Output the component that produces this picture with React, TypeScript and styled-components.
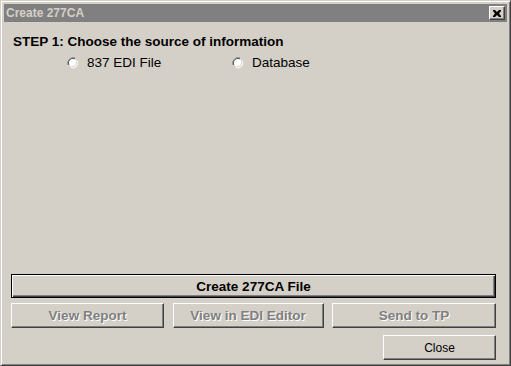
import React, { useState } from "react";
import styled, { createGlobalStyle, css } from "styled-components";

const GlobalStyle = createGlobalStyle`
  html, body {
    margin: 0;
    padding: 0;
    background: #d4d0c8;
  }
  * {
    box-sizing: border-box;
  }
`;

const raised = css`
  border: 1px solid;
  border-color: #ffffff #404040 #404040 #ffffff;
  box-shadow: inset -1px -1px #808080, inset 1px 1px #d4d0c8;
`;

const Window = styled.div`
  width: 511px;
  height: 366px;
  display: flex;
  flex-direction: column;
  padding: 2px;
  background: #d4d0c8;
  border: 1px solid;
  border-color: #d4d0c8 #404040 #404040 #d4d0c8;
  box-shadow: inset 1px 1px #ffffff, inset -1px -1px #808080;
  font-family: "Liberation Sans", Arial, sans-serif;
`;

const TitleBar = styled.div`
  height: 18px;
  margin: 1px;
  display: flex;
  align-items: center;
  justify-content: space-between;
  padding: 0 2px 0 2px;
  background: #808080;
  color: #d4d0c8;
  font-size: 12px;
  font-weight: bold;
`;

const CloseBox = styled.button`
  width: 16px;
  height: 14px;
  padding: 0;
  display: flex;
  align-items: center;
  justify-content: center;
  background: #d4d0c8;
  ${raised}
`;

const Body = styled.div`
  flex: 1;
  display: flex;
  flex-direction: column;
  padding: 11px 12px 3px 8px;
`;

const Heading = styled.div`
  font-size: 13.5px;
  font-weight: bold;
  line-height: 15px;
  padding-left: 2px;
  color: #000;
`;

const RadioRow = styled.div`
  display: flex;
  margin-top: 6px;
  padding-left: 56px;
`;

const RadioLabel = styled.label<{ $width: number }>`
  width: ${(p) => p.$width}px;
  display: flex;
  align-items: center;
  gap: 8px;
  font-size: 13.5px;
  line-height: 15px;
  color: #000;
  cursor: default;
`;

const Actions = styled.div`
  margin-top: auto;
  display: flex;
  flex-direction: column;
`;

const Button = styled.button<{ $default?: boolean; $width?: number; $bold?: boolean }>`
  height: ${(p) => (p.$default ? 24 : 25)}px;
  width: ${(p) => (p.$width ? `${p.$width}px` : "100%")};
  padding: 0;
  background: #d4d0c8;
  font-family: "Liberation Sans", Arial, sans-serif;
  font-size: ${(p) => (p.$bold ? 13.5 : 12)}px;
  font-weight: ${(p) => (p.$bold ? "bold" : "normal")};
  color: #000;
  ${(p) =>
    p.$default
      ? css`
          border: 1px solid #000;
          box-shadow: inset 1px 1px #ffffff, inset -1px -1px #404040,
            inset -2px -2px #808080;
        `
      : raised}
  &:disabled {
    color: #808080;
    text-shadow: 1px 1px #ffffff;
  }
`;

const ButtonRow = styled.div`
  display: flex;
  justify-content: space-between;
  margin-top: 5px;
`;

const CloseRow = styled.div`
  display: flex;
  justify-content: flex-end;
  margin-top: 7px;
`;

const RadioDot = ({ checked }: { checked: boolean }) => (
  <svg width="12" height="12" viewBox="0 0 12 12">
    <path d="M1 8 A5.5 5.5 0 0 1 8 1" fill="none" stroke="#808080" strokeWidth="1" />
    <path d="M2 8 A4.5 4.5 0 0 1 8 2" fill="none" stroke="#404040" strokeWidth="1" />
    <circle cx="6" cy="6" r="4" fill="#ffffff" />
    <path d="M10.5 4 A5 5 0 0 1 4 10.5" fill="none" stroke="#ffffff" strokeWidth="1" />
    <path d="M9.5 4.5 A4 4 0 0 1 4.5 9.5" fill="none" stroke="#d4d0c8" strokeWidth="1" />
    {checked && <circle cx="6" cy="6" r="2" fill="#000" />}
  </svg>
);

const App = () => {
  const [source, setSource] = useState<string>("");

  return (
    <>
      <GlobalStyle />
      <Window>
        <TitleBar>
          <span>Create 277CA</span>
          <CloseBox aria-label="Close">
            <svg width="8" height="7" viewBox="0 0 8 7">
              <path d="M0 0h2l2 2 2-2h2v1L6 3.5 8 6v1H6L4 5 2 7H0V6l2-2.5L0 1z" fill="#000" />
            </svg>
          </CloseBox>
        </TitleBar>
        <Body>
          <Heading>STEP 1: Choose the source of information</Heading>
          <RadioRow>
            <RadioLabel $width={165} onClick={() => setSource("edi")}>
              <RadioDot checked={source === "edi"} />
              837 EDI File
            </RadioLabel>
            <RadioLabel $width={120} onClick={() => setSource("db")}>
              <RadioDot checked={source === "db"} />
              Database
            </RadioLabel>
          </RadioRow>
          <Actions>
            <Button $default $bold>
              Create 277CA File
            </Button>
            <ButtonRow>
              <Button $width={153} $bold disabled>
                View Report
              </Button>
              <Button $width={151} $bold disabled>
                View in EDI Editor
              </Button>
              <Button $width={164} $bold disabled>
                Send to TP
              </Button>
            </ButtonRow>
            <CloseRow>
              <Button $width={113}>Close</Button>
            </CloseRow>
          </Actions>
        </Body>
      </Window>
    </>
  );
};

export default App;
